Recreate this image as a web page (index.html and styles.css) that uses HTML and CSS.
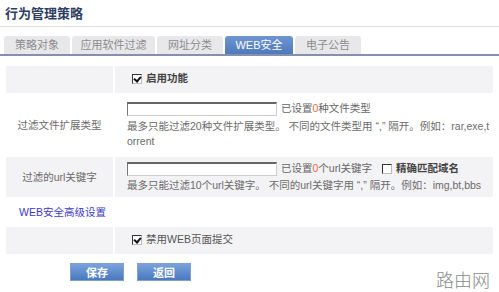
FILE: index.html
```html
<!DOCTYPE html>
<html lang="zh">
<head>
<meta charset="utf-8">
<title>行为管理策略</title>
<link rel="stylesheet" href="styles.css">
</head>
<body>
<div class="page">
  <h1 class="title">行为管理策略</h1>
  <div class="tabs">
    <span class="tab t1">策略对象</span>
    <span class="tab t2">应用软件过滤</span>
    <span class="tab t3">网址分类</span>
    <span class="tab t4 active">WEB安全</span>
    <span class="tab t5">电子公告</span>
  </div>
  <table class="grid">
    <tr class="r1 gray">
      <td class="label"></td>
      <td class="value"><label class="chk"><span class="box checked"></span><b>启用功能</b></label></td>
    </tr>
    <tr class="r2">
      <td class="label">过滤文件扩展类型</td>
      <td class="value">
        <div class="line"><span class="input"></span><span class="note">已设置<em>0</em>种文件类型</span></div>
        <div class="help">最多只能过滤20种文件扩展类型。 不同的文件类型用 “,” 隔开。例如：rar,exe,torrent</div>
      </td>
    </tr>
    <tr class="r3 gray">
      <td class="label">过滤的url关键字</td>
      <td class="value">
        <div class="line"><span class="input"></span><span class="note">已设置<em>0</em>个url关键字</span><label class="chk exact"><span class="box"></span><b>精确匹配域名</b></label></div>
        <div class="help">最多只能过滤10个url关键字。 不同的url关键字用 “,” 隔开。例如：img,bt,bbs</div>
      </td>
    </tr>
    <tr class="r4">
      <td class="link" colspan="2"><a href="#">WEB安全高级设置</a></td>
    </tr>
    <tr class="r5 gray">
      <td class="label"></td>
      <td class="value"><label class="chk"><span class="box checked"></span><span class="sub">禁用WEB页面提交</span></label></td>
    </tr>
  </table>
  <div class="buttons">
    <button class="btn">保存</button>
    <button class="btn">返回</button>
  </div>
  <div class="watermark">路由网</div>
</div>
</body>
</html>
```

FILE: styles.css
```css
* { box-sizing: border-box; }
html, body {
  margin: 0;
  padding: 0;
  background: #fff;
}
body {
  font-family: "Liberation Sans", "Noto Sans CJK SC", sans-serif;
  font-size: 10.5px;
  line-height: 15px;
  color: #666;
  width: 499px;
  height: 292px;
  overflow: hidden;
}
.page {
  position: relative;
  height: 292px;
}
.title {
  margin: 0;
  padding: 5px 0 0 5px;
  height: 27px;
  font-size: 13px;
  line-height: 18px;
  font-weight: bold;
  color: #2d3d63;
  border-bottom: 1px solid #dcdce0;
}
.tabs {
  display: flex;
  gap: 2px;
  margin-top: 9px;
  padding-left: 4px;
  border-bottom: 2px solid #8590ad;
  height: 20px;
}
.tab {
  height: 18px;
  line-height: 18px;
  text-align: center;
  background: #e8e8eb;
  color: #8c8c8c;
  border-radius: 3px 3px 0 0;
  font-size: 11px;
}
.t1 { width: 66px; }
.t2 { width: 83px; }
.t3 { width: 66px; }
.t4 { width: 68px; }
.t5 { width: 66px; }
.tab.active {
  background: linear-gradient(#6f96d2, #4f79bd);
  color: #fff;
}
.grid {
  margin: 8px 0 0 4px;
  width: 491px;
  border-spacing: 2px;
}
.grid td {
  padding: 0;
  vertical-align: middle;
}
.gray td { background: #f3f2f5; }
.label {
  width: 107px;
  text-align: center;
  color: #6b6b6b;
}
.value { padding-left: 12px !important; }
.r1 { height: 27px; }
.r2 { height: 60px; }
.r3 { height: 40px; }
.r4 { height: 26px; }
.r5 { height: 27px; }
.chk {
  display: inline-flex;
  align-items: center;
  gap: 4px;
  margin-left: 5px;
  color: #555;
}
.chk b { font-weight: bold; color: #444; }
.sub { color: #555; }
.box {
  display: inline-block;
  width: 10px;
  height: 10px;
  border: 1px solid #333;
  border-right-color: #bbb;
  border-bottom-color: #bbb;
  background: #fff;
  position: relative;
}
.box.checked::after {
  content: "";
  position: absolute;
  left: 2px;
  top: 0px;
  width: 3px;
  height: 5px;
  border: solid #111;
  border-width: 0 2px 2px 0;
  transform: rotate(40deg);
}
.line {
  display: flex;
  align-items: center;
  gap: 4px;
  height: 15px;
}
.input {
  display: inline-block;
  width: 150px;
  height: 14px;
  border: 1px solid #ccc;
  border-top: 2px solid #666;
  border-left: 1px solid #777;
  background: #fff;
}
.note em {
  font-style: normal;
  color: #f06a3a;
}
.exact { margin-left: 6px; }
.help {
  margin-top: 3px;
  color: #6b6b6b;
  word-break: break-all;
  padding-right: 2px;
}
.r3 .help { margin-top: 2px; }
.link {
  background: #fff;
  padding-left: 13px !important;
}
.link a {
  color: #3a3ad0;
  text-decoration: none;
}
.buttons {
  display: flex;
  gap: 13px;
  margin: 7px 0 0 70px;
}
.btn {
  width: 54px;
  height: 18px;
  padding: 0;
  border: 1px solid #7fa0d0;
  background: linear-gradient(#7aa3dc, #4a78bf);
  color: #fff;
  font-family: "Noto Sans CJK SC", sans-serif;
  font-size: 11px;
  font-weight: bold;
  line-height: 16px;
}
.watermark {
  position: absolute;
  right: 9px;
  bottom: 5px;
  font-family: "Noto Sans CJK SC", sans-serif;
  font-size: 18px;
  font-weight: 300;
  color: #8a8a8a;
}
```
